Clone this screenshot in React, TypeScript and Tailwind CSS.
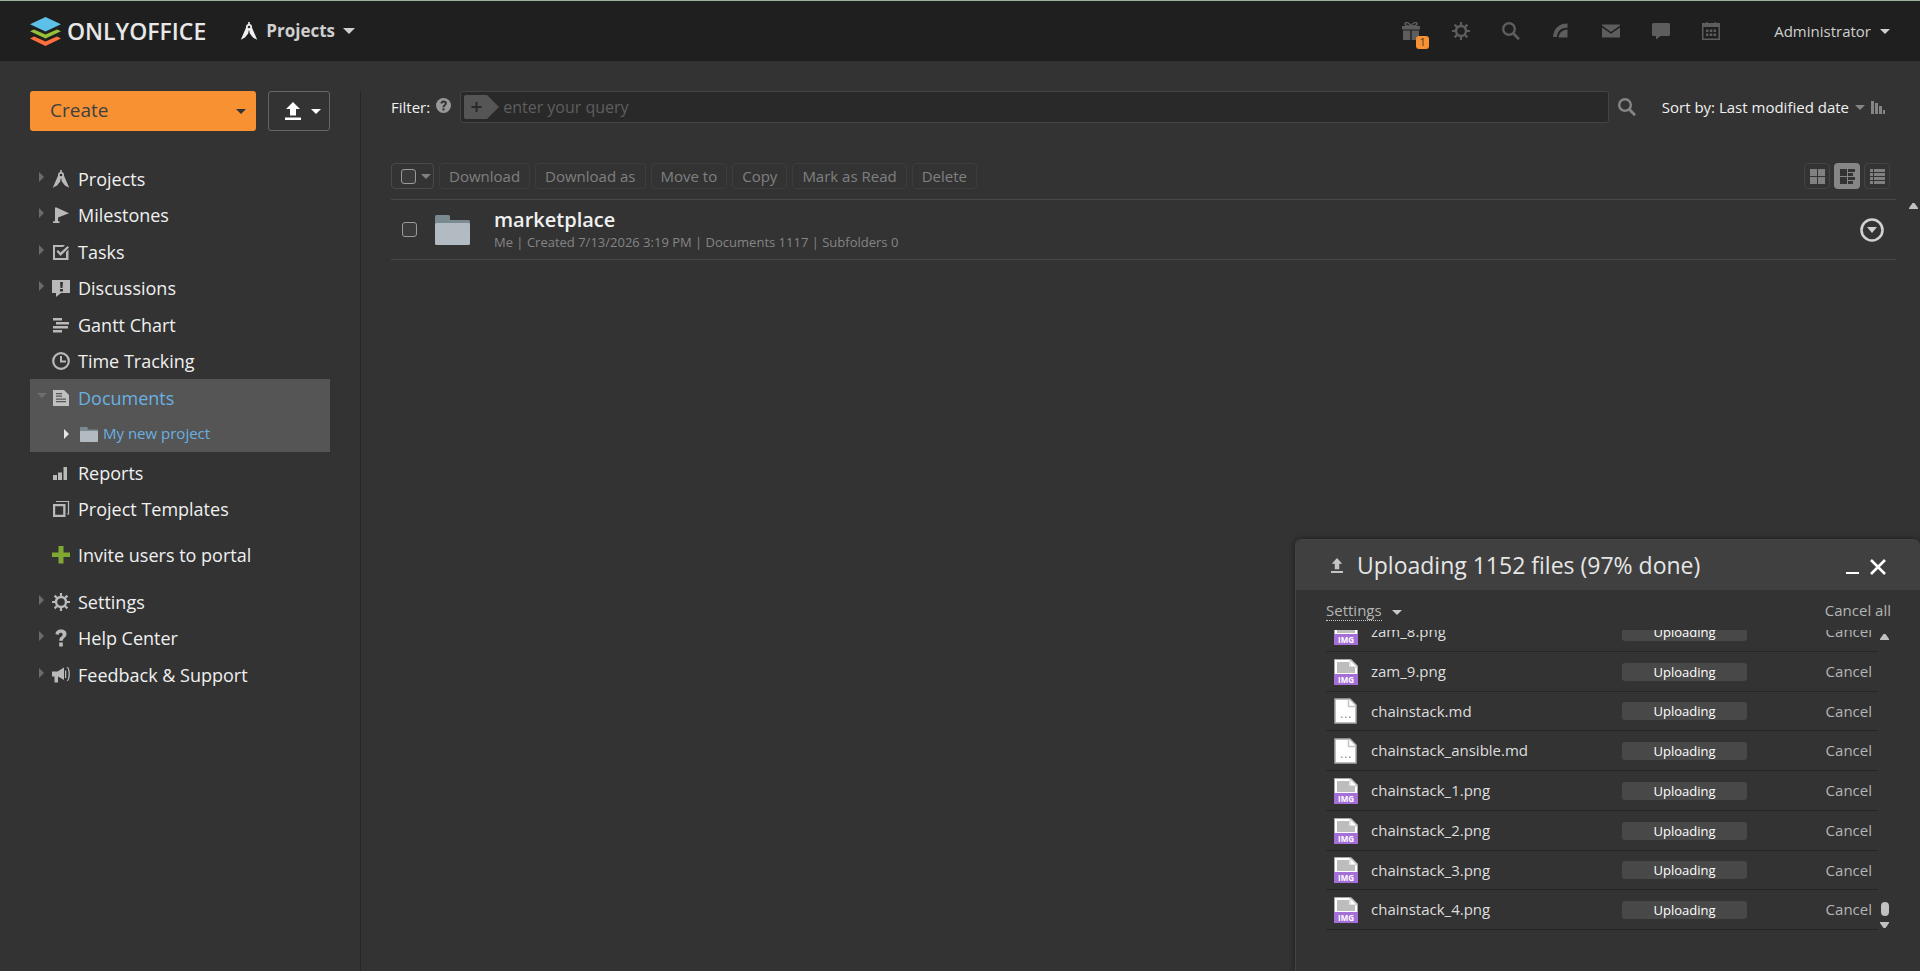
import type { ReactNode } from "react";

function Svg({ w, h, className = "", children }: { w: number; h: number; className?: string; children: ReactNode }) {
  return (
    <svg width={w} height={h} viewBox={`0 0 ${w} ${h}`} fill="currentColor" aria-hidden="true" className={`shrink-0 ${className}`}>
      {children}
    </svg>
  );
}

function CaretDown({ className = "" }: { className?: string }) {
  return (
    <Svg w={10} h={5} className={className}>
      <path d="M0 0h10L5 5z" />
    </Svg>
  );
}

function CompassIcon() {
  return (
    <Svg w={18} h={18}>
      <path d="M8.200 0H9.800V3H8.200zM6.300 5L.8 17.800 5 15.500 8.200 11.500 8.700 8.500H9.300L9.800 11.500 13 15.500 17.200 17.800 11.700 5z" />
      <circle cx="9" cy="5" r="3" />
      <circle cx="9" cy="5" r="1.300" fill="#2b2b2b" />
    </Svg>
  );
}

function FlagIcon() {
  return (
    <Svg w={18} h={18}>
      <path d="M3 1.500h1.500L17 7.200 6 11.400v3.800h1.500V17H1v-1.800h2z" />
    </Svg>
  );
}

function TaskIcon() {
  return (
    <Svg w={18} h={18}>
      <path d="M1 2h12l-2 2H3v11h11V9l2.500-2.500V17H1z" />
      <path d="M4.500 8.500L6 7l2.500 2.500L15.500 3 17 4.500l-8.500 8.500z" />
    </Svg>
  );
}

function DiscussIcon() {
  return (
    <Svg w={18} h={18}>
      <path d="M0 1h18v13H9l-5 4v-4H0z" />
      <path d="M8 3h3l-.5 6h-2zM8 10h3v2.500H8z" fill="#333" />
    </Svg>
  );
}

function GanttIcon() {
  return (
    <Svg w={18} h={18}>
      <path d="M1 2h9v2.500H1zM4 6h13v2.500H4zM1 10h15v2.500H1zM1 14h9v2.500H1z" />
    </Svg>
  );
}

function ClockIcon() {
  return (
    <Svg w={18} h={18}>
      <circle cx="9" cy="9" r="7.800" fill="none" stroke="currentColor" strokeWidth="2.200" />
      <path d="M8 4h2v4.500h4v2H8z" />
    </Svg>
  );
}

function DocIcon() {
  return (
    <Svg w={18} h={18}>
      <path d="M1 1h11l5 5v11H1z" />
      <path d="M4 4h6v1.300H4zM4 6.500h6v1.300H4zM4 9.500h10v1.300H4zM4 12h10v1.300H4z" fill="#555" />
    </Svg>
  );
}

function ReportIcon() {
  return (
    <Svg w={18} h={18}>
      <path d="M1 11h4v5H1zM6 8.500h4V16H6zM11.500 3H15v13h-3.500z" />
    </Svg>
  );
}

function TemplateIcon() {
  return (
    <Svg w={18} h={18}>
      <path d="M1 4h12.500v13H1zm2.200 2.200v8.600h8V6.200z" fillRule="evenodd" />
      <path d="M4.500 2V1.500h12V14H15" fill="none" stroke="currentColor" strokeWidth="1.200" />
    </Svg>
  );
}

function PlusIcon() {
  return (
    <Svg w={18} h={18} className="text-[#7ea832]">
      <path d="M6.500 0h5v6.500H18v4.500h-6.500v6.500h-5V11H0V6.500h6.500z" />
    </Svg>
  );
}

function GearIcon() {
  return (
    <Svg w={18} h={18}>
      <circle cx="9" cy="9" r="5" fill="none" stroke="currentColor" strokeWidth="2.400" />
      <path
        d="M9 0v4M9 14v4M0 9h4M14 9h4M2.600 2.600l3 3M12.400 12.400l3 3M15.400 2.600l-3 3M5.600 12.400l-3 3"
        stroke="currentColor"
        strokeWidth="2.200"
      />
    </Svg>
  );
}

function QuestionIcon() {
  return (
    <Svg w={18} h={18}>
      <path d="M3.500 5.200C3.500 2.200 5.800 .5 9 .5c3.300 0 5.500 1.600 5.500 4.500 0 3.800-3.700 3.600-3.700 6.700H7.200c0-4 3.400-3.900 3.400-6.200 0-1.200-.7-1.800-1.800-1.800-1.300 0-1.900.7-2 2zM7.200 13.500h3.600V17.500H7.200z" />
    </Svg>
  );
}

function HornIcon() {
  return (
    <Svg w={18} h={18}>
      <path d="M0 5.500h5.500L12 1.500V14l-6-3.500v6H2.500v-6H0z" />
      <path d="M13 4.500h1.200v7.500H13zM14.500 1h1.500c2.500 3 2.500 11 0 14h-1.500l1-1c1.400-3 1.400-9 0-12z" />
    </Svg>
  );
}

function FolderIcon({ w, h }: { w: number; h: number }) {
  return (
    <svg width={w} height={h} viewBox="0 0 35 30" preserveAspectRatio="none" aria-hidden="true" className="shrink-0">
      <path d="M0 1.500Q0 0 1.500 0H13.500Q15 0 15 1.500V5H33.500Q35 5 35 6.500V12H0z" fill="#7b8991" />
      <path d="M0 9.500Q0 8 1.500 8H33.500Q35 8 35 9.500V28.500Q35 30 33.500 30H1.500Q0 30 0 28.500z" fill="#b2bac2" />
    </svg>
  );
}

function UploadIcon({ w, h }: { w: number; h: number }) {
  return (
    <svg width={w} height={h} viewBox="0 0 16 18" preserveAspectRatio="none" fill="currentColor" aria-hidden="true" className="shrink-0">
      <path d="M8 0l7 7h-4v6.500H5V7H1zM0 15.500h16V18H0z" />
    </svg>
  );
}

function SearchIcon() {
  return (
    <Svg w={18} h={18}>
      <circle cx="7" cy="7" r="5.800" fill="none" stroke="currentColor" strokeWidth="2.400" />
      <path d="M11 11l6 6.200" stroke="currentColor" strokeWidth="2.800" />
    </Svg>
  );
}

function GiftIcon() {
  return (
    <Svg w={18} h={18}>
      <path d="M0 4h18v3.500H0zM1 8.500h7.300V18H1zM9.700 8.500H17V18H9.700z" />
      <path d="M9 4C7 0 3.500 0 3 1.500S5 4 9 4zm0 0c2-4 5.500-4 6-2.500S13 4 9 4z" fill="none" stroke="currentColor" strokeWidth="1.400" />
    </Svg>
  );
}

function FeedIcon() {
  return (
    <Svg w={18} h={18}>
      <path d="M1 15C2 6 7 1.500 15.500 1.500v4.200C9 5.700 5.800 8.500 4.800 15zM6.500 15.500c.6-5 4.300-7.700 9-8v8z" />
    </Svg>
  );
}

function MailIcon() {
  return (
    <Svg w={18} h={18}>
      <path d="M0 2.500h18v1L9 10 0 3.500zM0 5.500l9 6.300 9-6.300V15.500H0z" />
    </Svg>
  );
}

function ChatIcon() {
  return (
    <Svg w={18} h={18}>
      <path d="M1.500 1h15Q18 1 18 2.500v10q0 1.500-1.500 1.500H8.500L4 17.500V14H1.500Q0 14 0 12.500v-10Q0 1 1.500 1z" />
    </Svg>
  );
}

function CalendarIcon() {
  return (
    <Svg w={18} h={18}>
      <path d="M0 1h18v17H0zM1.500 5v11.500h15V5z" fillRule="evenodd" />
      <path d="M4 0h1.500v2H4zM12.500 0H14v2h-1.500zM4 7.500h2.500v2.500H4zM7.800 7.500h2.500v2.500H7.800zM11.500 7.500H14v2.500h-2.500zM4 11.500h2.500V14H4zM7.800 11.500h2.500V14H7.800zM11.500 11.500H14V14h-2.500z" />
    </Svg>
  );
}

function LogoMark() {
  return (
    <Svg w={31} h={29}>
      <path d="M0 21.500L4 19.500 15.500 24.500 27 19.500 31 21.500 15.500 29z" fill="#ff6f3d" />
      <path d="M0 14.300L4 12.500 15.500 17.500 27 12.500 31 14.300 15.500 21.500z" fill="#95c038" />
      <path d="M0 7.300L15.500 0 31 7.300 15.500 14.500z" fill="#5dc0e8" />
    </Svg>
  );
}

const topIcons = [
  { name: "Settings", icon: <GearIcon /> },
  { name: "Search", icon: <SearchIcon /> },
  { name: "Feed", icon: <FeedIcon /> },
  { name: "Mail", icon: <MailIcon /> },
  { name: "Talk", icon: <ChatIcon /> },
  { name: "Calendar", icon: <CalendarIcon /> },
];

type Item = { label: string; icon: ReactNode; arrow?: boolean };

const primary: Item[] = [
  { label: "Projects", icon: <CompassIcon />, arrow: true },
  { label: "Milestones", icon: <FlagIcon />, arrow: true },
  { label: "Tasks", icon: <TaskIcon />, arrow: true },
  { label: "Discussions", icon: <DiscussIcon />, arrow: true },
  { label: "Gantt Chart", icon: <GanttIcon /> },
  { label: "Time Tracking", icon: <ClockIcon /> },
];
const secondary: Item[] = [
  { label: "Reports", icon: <ReportIcon /> },
  { label: "Project Templates", icon: <TemplateIcon /> },
];
const invite: Item[] = [{ label: "Invite users to portal", icon: <PlusIcon /> }];
const tertiary: Item[] = [
  { label: "Settings", icon: <GearIcon />, arrow: true },
  { label: "Help Center", icon: <QuestionIcon />, arrow: true },
  { label: "Feedback & Support", icon: <HornIcon />, arrow: true },
];

function NavList({ items, className = "" }: { items: Item[]; className?: string }) {
  return (
    <ul className={className}>
      {items.map((it) => (
        <li key={it.label} className="h-9 odd:h-[37px]">
          <a href="#" className="flex h-full items-center gap-2 pl-[9px] text-[#f0f0f0]">
            <span className="w-[5px] pb-1">
              {it.arrow && (
                <Svg w={5} h={10} className="text-[#6b6b6b]">
                  <path d="M0 0l5 5-5 5z" />
                </Svg>
              )}
            </span>
            <span className="text-[#b9b9b9]">{it.icon}</span>
            <span>{it.label}</span>
          </a>
        </li>
      ))}
    </ul>
  );
}

const actions = ["Download", "Download as", "Move to", "Copy", "Mark as Read", "Delete"];

const files = [
  "zam_8.png",
  "zam_9.png",
  "chainstack.md",
  "chainstack_ansible.md",
  "chainstack_1.png",
  "chainstack_2.png",
  "chainstack_3.png",
  "chainstack_4.png",
];

function FileIcon({ image }: { image: boolean }) {
  return (
    <svg width="24" height="26" viewBox="0 0 24 26" aria-hidden="true" className="shrink-0">
      {image ? (
        <>
          <path d="M.5.500H17L23.500 7V25.500H.5z" fill="#fff" stroke="#a9a9a9" />
          <path d="M3 3h12v5h6v6H3z" fill="#bdbdbd" />
          <path d="M16 1v7h7z" fill="#fff" stroke="#bdbdbd" strokeWidth=".8" />
          <path d="M0 15h24v11H0z" fill="#a56fd8" />
          <text x="12" y="24" textAnchor="middle" fontSize="8" fontWeight="700" fill="#fff" fontFamily="Open Sans, sans-serif">
            IMG
          </text>
        </>
      ) : (
        <>
          <path d="M1 1H16L22 7V25H1z" fill="#fff" stroke="#a9a9a9" strokeWidth="1.500" />
          <path d="M14.500 1v7.500H22" fill="none" stroke="#c4c4c4" strokeWidth="1.500" />
          <path d="M7 18.500h1.500V20H7zM11 18.500h1.500V20H11zM15 18.500h1.500V20H15z" fill="#9a9a9a" />
        </>
      )}
    </svg>
  );
}

function ScrollArrow({ down = false }: { down?: boolean }) {
  return (
    <Svg w={9} h={6} className="text-[#c1c1c1]">
      <path d={down ? "M0 0h9v1L5.500 6h-2L0 1z" : "M3.500 0h2L9 5v1H0V5z"} />
    </Svg>
  );
}

function Checkbox({ label }: { label: string }) {
  return (
    <input
      type="checkbox"
      aria-label={label}
      className="size-[15px] shrink-0 appearance-none rounded-[3px] border border-[#9a9a9a] bg-[#3b3b3b]"
    />
  );
}

function UploadPanel() {
  return (
    <section
      aria-label="Uploads"
      className="absolute right-0 bottom-0 w-[625px] rounded-t-md border-t border-l border-[#444] bg-[#333] pb-[41px] text-[15px] text-[#b5b5b5] shadow-[0_0_6px_rgba(0,0,0,0.5)]"
    >
      <header className="flex h-[50px] items-center rounded-t-md bg-[#404040] pr-[34px] pl-[35px] text-[#e6e6e6]">
        <span className="text-[#c4c4c4]">
          <UploadIcon w={12} h={15} />
        </span>
        <h2 className="ml-[14px] text-[23px] leading-8">Uploading 1152 files (97% done)</h2>
        <div className="ml-auto flex items-end gap-[11px] pt-1 text-white">
          <button type="button" aria-label="Minimize" className="pb-px">
            <Svg w={13} h={2}>
              <path d="M0 0h13v2H0z" />
            </Svg>
          </button>
          <button type="button" aria-label="Close">
            <Svg w={16} h={16}>
              <path d="M1 1l14 14M15 1L1 15" stroke="currentColor" strokeWidth="2.600" />
            </Svg>
          </button>
        </div>
      </header>
      <div className="flex h-10 items-center justify-between pr-[29px] pl-[30px]">
        <button type="button" className="flex items-center gap-2.5">
          <span className="border-b border-dotted border-[#c8c8c8] leading-5">Settings</span>
          <CaretDown className="mt-1 text-[#c8c8c8]" />
        </button>
        <button type="button">Cancel all</button>
      </div>
      <div className="flex h-[300px] overflow-hidden pl-[30px]">
        <ul className="flex w-[552px] flex-col self-end">
          {files.map((f) => (
            <li key={f} className="flex h-10 shrink-0 items-center border-b border-[#262626] pl-2 nth-[4n+3]:h-[39px]">
              <FileIcon image={f.endsWith(".png")} />
              <span className="ml-[13px] w-[251px] text-[#dedede]">{f}</span>
              <span className="h-[18px] w-[125px] rounded-[3px] bg-[#484848] text-center text-[13px] leading-[18px] text-white">
                Uploading
              </span>
              <button type="button" className="ml-auto pr-1.5">
                Cancel
              </button>
            </li>
          ))}
        </ul>
        <div className="ml-0.5 flex flex-col items-center pt-1 pb-0.5">
          <ScrollArrow />
          <div className="mt-auto mb-1.5 h-[14px] w-[8px] rounded bg-[#c1c1c1]" />
          <ScrollArrow down />
        </div>
      </div>
    </section>
  );
}

const iconButton = "grid size-[26px] place-items-center rounded border border-[#444]";

export default function App() {
  return (
    <div className="relative flex min-h-screen flex-col overflow-hidden border-t border-[#9cb49c] bg-[#333] font-['Open_Sans',sans-serif] text-[#f0f0f0]">
      <header className="flex h-[60px] items-center bg-[#1f1f1f] px-[30px]">
        <a href="#" className="flex items-center gap-1.5 text-[23px] leading-7 font-semibold text-[#e8e8e8]">
          <LogoMark />
          <span>ONLYOFFICE</span>
        </a>
        <button type="button" className="ml-[34px] flex items-center gap-2 text-[17px] font-bold text-[#cfcfcf]">
          <span className="text-[#f0f0f0]">
            <CompassIcon />
          </span>
          <span>Projects</span>
          <Svg w={12} h={6}>
            <path d="M0 0h12L6 6z" />
          </Svg>
        </button>
        <div className="ml-auto flex items-center gap-8 text-[#5d5d5d]">
          <a href="#" aria-label="Gifts" className="relative">
            <GiftIcon />
            <span className="absolute top-[14px] left-[14px] h-[13px] w-[13px] rounded-[3px] bg-[#f79132] text-center text-[10px] leading-[13px] text-[#333]">1</span>
          </a>
          {topIcons.map((t) => (
            <a key={t.name} href="#" aria-label={t.name}>
              {t.icon}
            </a>
          ))}
        </div>
        <button type="button" className="ml-[54px] flex items-center gap-[9px] text-[15px] text-[#cfcfcf]">
          <span>Administrator</span>
          <CaretDown />
        </button>
      </header>

      <div className="flex flex-1 pt-[30px] pl-[30px]">
        <aside className="w-[331px] shrink-0 border-r border-[#262626] pr-[30px] text-lg">
          <div className="flex gap-3">
            <button type="button" className="flex h-10 flex-1 items-center justify-between rounded-[3px] bg-[#f79132] pr-2.5 pl-5 text-[19px] text-[#404040]">
              <span>Create</span>
              <CaretDown className="text-[#333]" />
            </button>
            <button type="button" aria-label="Upload" className="flex h-10 w-[62px] items-center justify-center gap-2.5 rounded-[3px] border border-[#666] pl-2 text-white">
              <UploadIcon w={16} h={18} />
              <CaretDown />
            </button>
          </div>
          <nav>
            <NavList items={primary} className="mt-[29px]" />
            <div className="bg-[#555] text-[#6ab0e0]">
              <a href="#" className="flex h-[37px] items-center gap-2 pl-[9px]">
                <span className="flex w-[5px] justify-center pb-1">
                  <CaretDown className="text-[#6f6f6f]" />
                </span>
                <span className="text-[#c0c0c0]">
                  <DocIcon />
                </span>
                <span>Documents</span>
              </a>
              <a href="#" className="flex h-9 items-center pl-[34px] text-[15px]">
                <Svg w={5} h={10} className="text-[#e6e6e6]">
                  <path d="M0 0l5 5-5 5z" />
                </Svg>
                <span className="mr-[5px] ml-[11px]">
                  <FolderIcon w={18} h={15} />
                </span>
                <span>My new project</span>
              </a>
            </div>
            <NavList items={secondary} className="mt-0.5" />
            <NavList items={invite} className="mt-[9px]" />
            <NavList items={tertiary} className="mt-2.5" />
          </nav>
        </aside>

        <main className="min-w-0 flex-1 pr-6 pl-[30px]">
          <div className="flex h-8 items-center text-[15px]">
            <label htmlFor="query">Filter:</label>
            <svg width="15" height="15" viewBox="0 0 15 15" aria-hidden="true" className="mr-[9px] mb-1 ml-[6px] shrink-0">
              <circle cx="7.500" cy="7.500" r="7.500" fill="#999" />
              <path d="M4.500 5.600C4.500 3.600 5.900 2.600 7.700 2.600c1.900 0 3.200 1 3.200 2.600 0 2.200-2.400 2.200-2.400 4H6.500c0-2.400 2.200-2.300 2.200-3.800 0-.6-.4-.9-1-.9-.7 0-1 .4-1.100 1.100zM6.500 10.200h2v2.200H6.500z" fill="#333" />
            </svg>
            <div className="flex h-8 flex-1 items-center gap-1 rounded-[3px] border border-[#444] bg-[#292929] pl-[3px]">
              <Svg w={35} h={24} className="text-[#555]">
                <path d="M2 0H23L35 12 23 24H2Q0 24 0 22V2Q0 0 2 0z" />
                <path d="M11.500 7h2v4h4v2h-4v4h-2v-4h-4v-2h4z" fill="#292929" />
              </Svg>
              <input id="query" placeholder="enter your query" className="flex-1 bg-transparent text-base placeholder:text-[#5e5e5e]" />
            </div>
            <button type="button" aria-label="Search" className="ml-[9px] text-[#858585]">
              <SearchIcon />
            </button>
            <button type="button" className="mr-[11px] ml-[26px] flex items-center gap-1.5">
              <span>Sort by: Last modified date</span>
              <CaretDown className="text-[#858585]" />
              <Svg w={14} h={13} className="text-[#858585]">
                <path d="M0 0h3v13H0zM4 2h3v11H4zM8 5h3v8H8zM12 9h2v4h-2z" />
              </Svg>
            </button>
          </div>

          <div className="mt-10 flex h-[26px] items-center gap-[5px] text-[15px] text-[#808080]">
            <div className="flex h-[26px] w-[43px] items-center gap-[5px] rounded border border-[#4a4a4a] pl-[9px]">
              <Checkbox label="Select all" />
              <CaretDown className="text-[#808080]" />
            </div>
            {actions.map((a) => (
              <button key={a} type="button" className="h-[26px] rounded border border-[#3d3d3d] px-[9px] leading-6">
                {a}
              </button>
            ))}
            <div className="mr-[6px] ml-auto flex gap-1">
              <button type="button" aria-label="Tiles" className={iconButton}>
                <Svg w={15} h={15}>
                  <path d="M0 0h7v7H0zM8 0h7v7H8zM0 8h7v7H0zM8 8h7v7H8z" />
                </Svg>
              </button>
              <button type="button" aria-label="Detailed" className="grid size-[26px] place-items-center rounded bg-[#868686] text-[#333]">
                <Svg w={15} h={15}>
                  <path d="M0 0h7v7H0zM0 8h7v7H0zM8 0h7v3H8zM8 4h5v3H8zM8 8h7v3H8zM8 12h5v3H8z" />
                </Svg>
              </button>
              <button type="button" aria-label="Compact" className={iconButton}>
                <Svg w={15} h={15}>
                  <path d="M0 0h3v3H0zM4 0h11v3H4zM0 4h3v3H0zM4 4h11v3H4zM0 8h3v3H0zM4 8h11v3H4zM0 12h3v3H0zM4 12h11v3H4z" />
                </Svg>
              </button>
            </div>
          </div>

          <div className="mt-2.5 flex h-[61px] items-center border-y border-[#484848] pr-3 pl-[11px]">
            <Checkbox label="Select marketplace" />
            <span className="mr-6 ml-[18px]">
              <FolderIcon w={35} h={30} />
            </span>
            <div>
              <a href="#" className="block text-xl leading-6 font-semibold">
                marketplace
              </a>
              <p className="text-[13px] leading-5 text-[#858585]">Me | Created 7/13/2026 3:19 PM | Documents 1117 | Subfolders 0</p>
            </div>
            <button type="button" aria-label="Actions" className="ml-auto text-[#d0d0d0]">
              <Svg w={24} h={24}>
                <circle cx="12" cy="12" r="10.500" fill="none" stroke="currentColor" strokeWidth="2.600" />
                <path d="M7 9h10l-5 6z" />
              </Svg>
            </button>
          </div>
        </main>
      </div>

      <div className="absolute top-[202px] right-[2px]">
        <ScrollArrow />
      </div>
      <UploadPanel />
    </div>
  );
}
